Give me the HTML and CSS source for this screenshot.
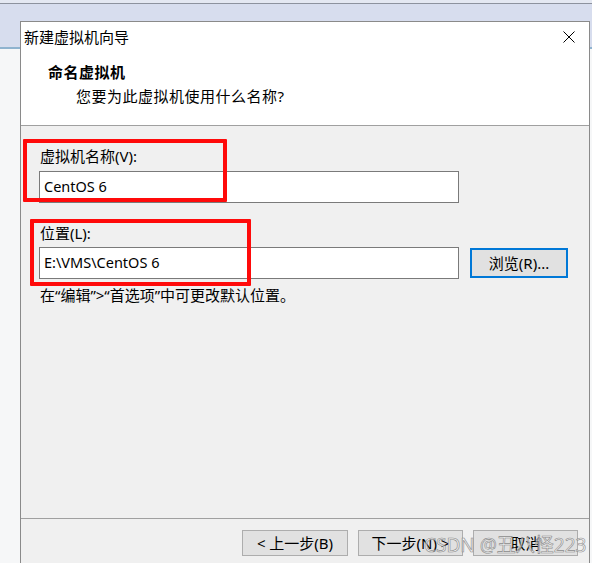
FILE: index.html
```html
<!DOCTYPE html>
<html lang="zh-CN">
<head>
<meta charset="utf-8">
<title>新建虚拟机向导</title>
<link rel="stylesheet" href="styles.css">
</head>
<body>
<div class="screen">
  <div class="topstrip"></div>
  <div class="dialog">
    <div class="titlebar">
      <span class="title">新建虚拟机向导</span>
      <svg class="close" width="12" height="12" viewBox="0 0 12 12"><path d="M0.5 0.5 L11.5 11.5 M11.5 0.5 L0.5 11.5" stroke="#000" stroke-width="1" fill="none"/></svg>
    </div>
    <div class="header">
      <div class="heading">命名虚拟机</div>
      <div class="sub">您要为此虚拟机使用什么名称?</div>
    </div>
    <div class="content">
      <div class="label">虚拟机名称(V):</div>
      <div class="row"><div class="input">CentOS 6</div></div>
      <div class="label label-loc">位置(L):</div>
      <div class="row row-loc"><div class="input">E:\VMS\CentOS 6</div><div class="btn browse">浏览(R)...</div></div>
      <div class="hint">在“编辑”&gt;“首选项”中可更改默认位置。</div>
    </div>
    <div class="footer">
      <div class="btn">&lt; 上一步(B)</div>
      <div class="btn">下一步(N) &gt;</div>
      <div class="btn">取消</div>
    </div>
  </div>
  <div class="mark mark-name"></div>
  <div class="mark mark-loc"></div>
  <div class="watermark">CSDN @丑八怪223</div>
</div>
</body>
</html>
```
FILE: styles.css
```css
* { box-sizing: border-box; }
html, body { margin: 0; padding: 0; }
body {
  width: 592px;
  height: 563px;
  overflow: hidden;
  font-family: "Noto Sans", "Noto Sans CJK SC", sans-serif;
  font-size: 15px;
  color: #000;
  background: linear-gradient(to bottom, #d7ddee 0, #d7ddee 47px, #8fb3cf 47px, #8fb3cf 49px, #f6f7f8 49px, #f6f7f8 100%);
}
.screen {
  position: relative;
  width: 592px;
  height: 563px;
  overflow: hidden;
}
.topstrip {
  height: 4px;
  background: #e4e8f2;
  border-bottom: 1px solid #8d929e;
}
.dialog {
  margin: 17px 0 0 20px;
  width: 570px;
  height: 560px;
  border: 1px solid #8a8a8a;
  border-bottom: none;
  background: #f0f0f0;
}
.titlebar {
  height: 30px;
  background: #fff;
  display: flex;
  align-items: center;
  justify-content: space-between;
  padding: 0 14px 0 3px;
}
.title { line-height: 20px; }
.close { display: block; }
.header {
  height: 74px;
  background: #fff;
  border-bottom: 1px solid #a0a0a0;
  padding: 10px 0 0 27px;
}
.heading { font-weight: bold; line-height: 20px; letter-spacing: 0.5px; }
.sub { line-height: 20px; margin: 4px 0 0 28px; letter-spacing: 0.5px; }
.content {
  height: 393px;
  border-bottom: 1px solid #a0a0a0;
  padding: 20px 0 0 18px;
}
.label { line-height: 20px; padding-left: 1px; }
.row { display: flex; align-items: center; gap: 11px; margin-top: 5px; }
.label-loc { margin-top: 20px; }
.row-loc { margin-top: 4px; }
.input {
  width: 420px;
  height: 32px;
  background: #fff;
  border: 1px solid #7a7a7a;
  padding-left: 4px;
  font-size: 14.5px;
  line-height: 29px;
}
.btn {
  height: 26px;
  width: 105px;
  background: #e1e1e1;
  border: 1px solid #adadad;
  display: flex;
  align-items: center;
  justify-content: center;
  line-height: 20px;
}
.browse {
  width: 98px;
  height: 30px;
  border: 2px solid #0078d7;
}
.hint { line-height: 20px; margin-top: 6px; padding-left: 1px; }
.footer {
  display: flex;
  justify-content: flex-end;
  gap: 10px;
  padding: 11px 11px 0 0;
}
.footer .btn:first-child { width: 106px; }
.mark {
  position: absolute;
  border: 4px solid #ff0a0a;
  border-radius: 1px;
}
.mark-name { left: 23px; top: 139px; width: 204px; height: 63px; }
.mark-loc { left: 30px; top: 219px; width: 221px; height: 67px; }
.watermark {
  position: absolute;
  left: 424px;
  top: 532px;
  font-size: 19px;
  line-height: 26px;
  color: rgba(255, 255, 255, 0.55);
  -webkit-text-stroke: 0.6px #8a8a8a;
  white-space: nowrap;
}
```
